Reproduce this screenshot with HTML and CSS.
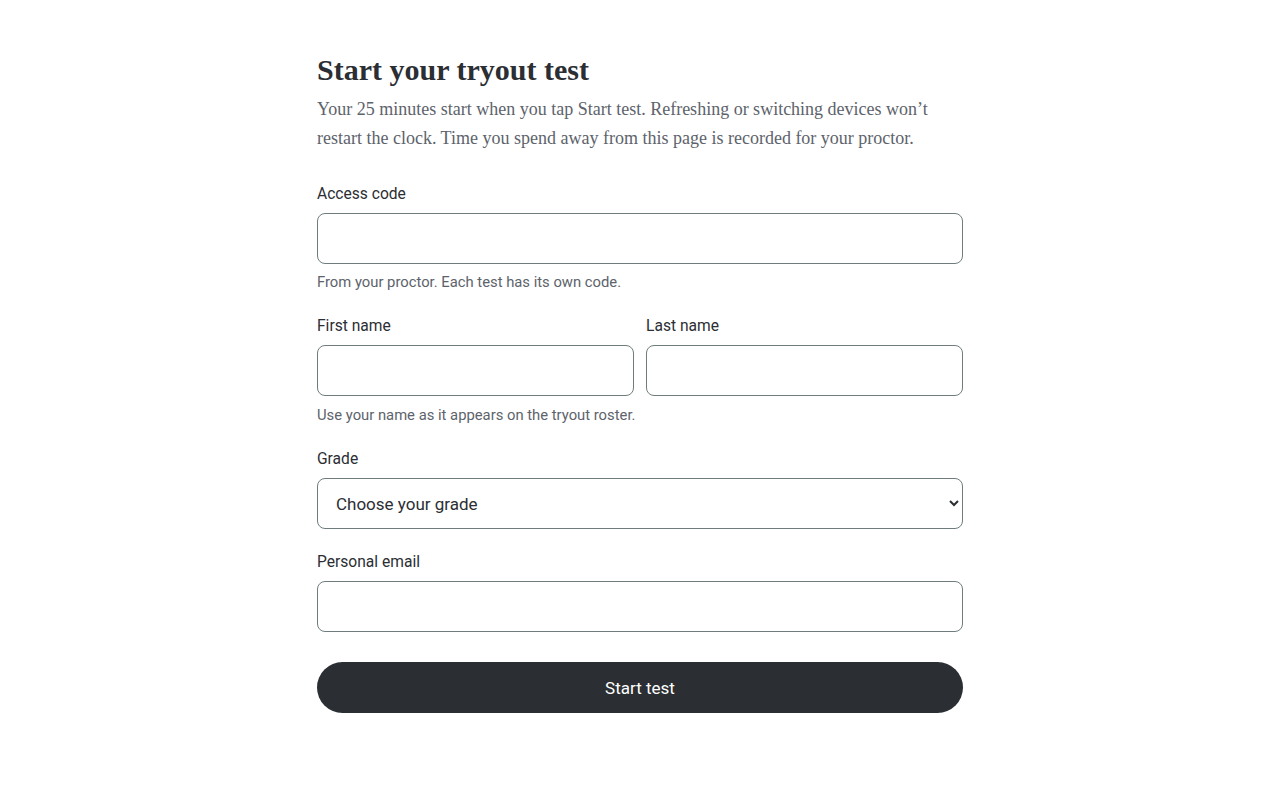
FILE: index.html
```html
<!DOCTYPE html>
<html lang="en">
<head>
    <meta charset="UTF-8">
    <meta name="viewport" content="width=device-width, initial-scale=1.0">
    <title>Start your tryout test</title>
    <link rel="stylesheet" href="styles.css">
</head>
<body>
    <main class="page">
        <h1>Start your tryout test</h1>
        <p class="intro">Your 25 minutes start when you tap Start test. Refreshing or switching devices won’t restart the clock. Time you spend away from this page is recorded for your proctor.</p>

        <form class="form" onsubmit="return false;">
            <div class="field">
                <label for="access-code">Access code</label>
                <input type="text" id="access-code">
                <div class="hint">From your proctor. Each test has its own code.</div>
            </div>

            <div class="field">
                <div class="row">
                    <div class="col">
                        <label for="first-name">First name</label>
                        <input type="text" id="first-name">
                    </div>
                    <div class="col">
                        <label for="last-name">Last name</label>
                        <input type="text" id="last-name">
                    </div>
                </div>
                <div class="hint hint-row">Use your name as it appears on the tryout roster.</div>
            </div>

            <div class="field">
                <label for="grade">Grade</label>
                <select id="grade">
                    <option>Choose your grade</option>
                    <option>9</option>
                    <option>10</option>
                    <option>11</option>
                    <option>12</option>
                </select>
            </div>

            <div class="field">
                <label for="email">Personal email</label>
                <input type="email" id="email">
            </div>

            <button type="submit" class="start-btn">Start test</button>
        </form>
    </main>
</body>
</html>
```

FILE: styles.css
```css
body {
    margin: 0;
    background: #ffffff;
    color: #2b2e33;
    font-family: Roboto, Inter, "Liberation Sans", Arial, sans-serif;
}
.page {
    width: 646px;
    margin: 0 auto;
    padding-top: 52px;
}
h1 {
    font-family: "Liberation Serif", "Times New Roman", serif;
    font-size: 30px;
    line-height: 36px;
    font-weight: bold;
    color: #2b2e33;
    margin: 0 0 7px;
}
.intro {
    font-family: "Liberation Serif", "Times New Roman", serif;
    font-size: 18px;
    line-height: 29px;
    color: #5d636b;
    margin: 0 0 28px;
}
.form {
    display: flex;
    flex-direction: column;
    gap: 20px;
}
.field label {
    display: block;
    font-size: 15.6px;
    line-height: 26px;
    color: #2b2e33;
    margin-bottom: 6px;
}
.row {
    display: flex;
    gap: 12px;
}
.col {
    flex: 1;
}
input,
select {
    display: block;
    width: 100%;
    height: 51px;
    box-sizing: border-box;
    border: 1px solid #6f7c7c;
    border-radius: 8px;
    background: #ffffff;
    font-family: inherit;
    font-size: 17px;
    color: #2b2e33;
    padding: 0 17px;
}
select {
    padding: 0 14px;
}
.hint {
    font-size: 14.8px;
    line-height: 22px;
    color: #5d636b;
    margin-top: 7px;
}
.hint-row {
    margin-top: 8px;
}
.start-btn {
    margin-top: 10px;
    height: 51px;
    border: none;
    border-radius: 26px;
    background: #2b2e33;
    color: #ffffff;
    font-family: inherit;
    font-size: 17px;
    cursor: pointer;
}
```
